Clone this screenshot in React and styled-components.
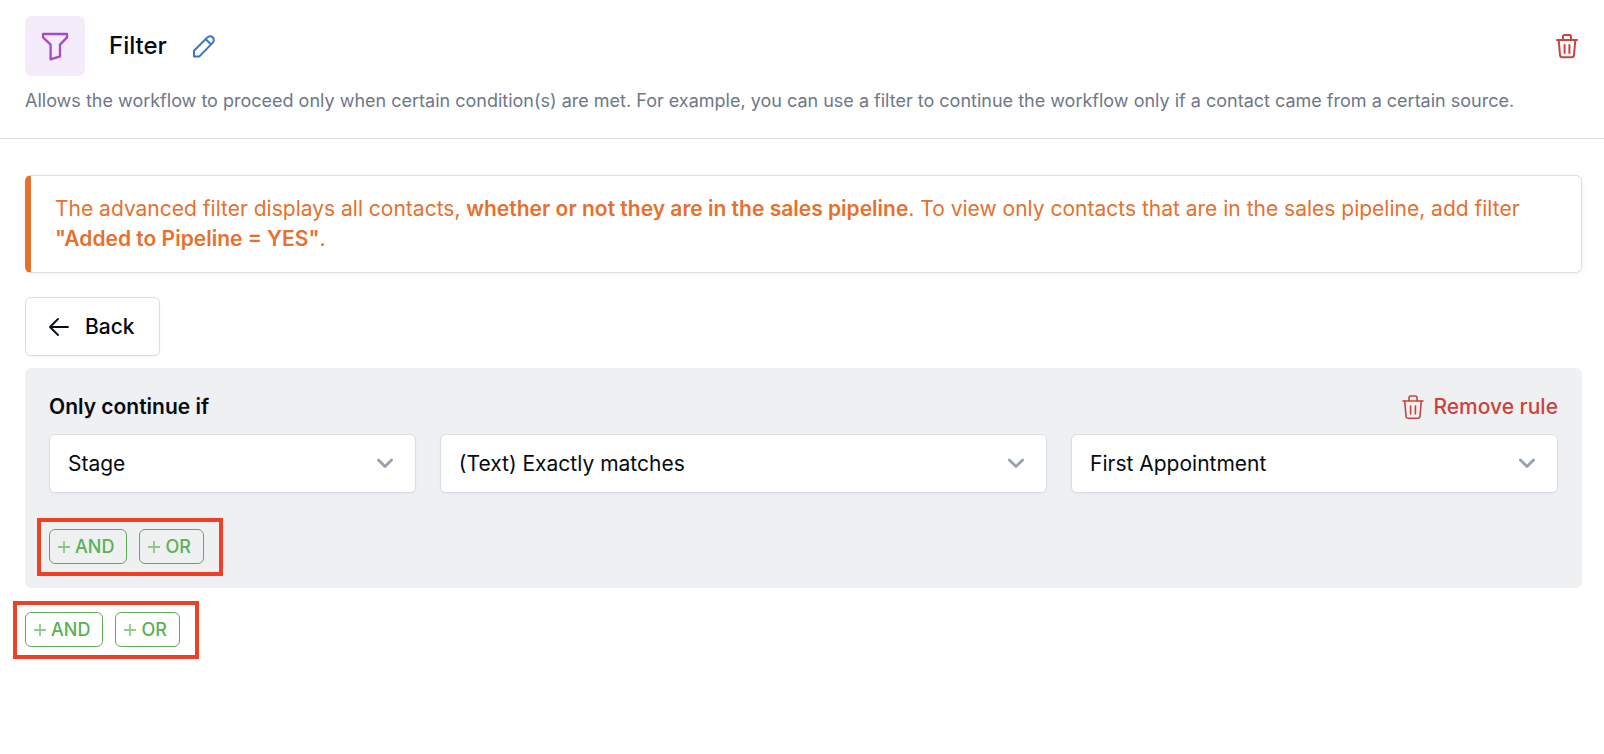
import React, { useState } from "react";
import styled, { createGlobalStyle } from "styled-components";

const TrashIcon = ({ thin }) => (
    <svg width="24" height="26" viewBox="0 0 24 26" fill="none" stroke="currentColor" strokeWidth={thin ? 1.6 : 2} strokeLinecap="round" strokeLinejoin="round" aria-hidden="true">
        <path d="M2 7h20" />
        <path d="M8 7V3.6Q8 2 9.6 2h4.8Q16 2 16 3.6V7" />
        <path d="M3.7 7l1.3 15.2q.2 2 2.2 2h9.6q2 0 2.2-2L20.3 7" />
        <path d="M9.6 12v8M14.4 12v8" />
    </svg>
);

const Chevron = () => (
    <svg width="18" height="12" viewBox="0 0 18 12" fill="none" stroke="currentColor" strokeWidth="2.8" strokeLinecap="round" strokeLinejoin="round" aria-hidden="true">
        <path d="M2.4 2l6.6 6.6L15.6 2" />
    </svg>
);

const fields = [
    { label: "Field", value: "Stage", options: ["Stage", "Source", "Tag"] },
    { label: "Operator", value: "(Text) Exactly matches", options: ["(Text) Exactly matches", "(Text) Contains"] },
    { label: "Value", value: "First Appointment", options: ["First Appointment", "Closed"] },
];

function Conditions() {
    return (
        <Group>
            {["AND", "OR"].map((name) => (
                <AddButton key={name} type="button">
                    <svg width="12" height="12" viewBox="0 0 12 12" stroke="currentColor" strokeWidth="1.8" opacity="0.65" aria-hidden="true">
                        <path d="M6 0v12M0 6h12" />
                    </svg>
                    {name}
                </AddButton>
            ))}
        </Group>
    );
}

function App() {
    const [values, setValues] = useState(fields.map((f) => f.value));

    function change(i, value) {
        setValues(values.map((v, n) => (n === i ? value : v)));
    }

    return (
        <>
            <GlobalStyle />
            <Header>
                <TitleRow>
                    <FilterBadge>
                        <svg width="28" height="30" viewBox="0 0 28 30" fill="none" stroke="currentColor" strokeWidth="2.3" strokeLinejoin="round" aria-hidden="true">
                            <path d="M2 3H26V6.4L19 13.6V25.4L9.6 28.4V13.6L2 6.4Z" />
                        </svg>
                    </FilterBadge>
                    <Title>Filter</Title>
                    <IconButton type="button" aria-label="Edit name" $color="#3b72c8">
                        <svg width="22" height="24" viewBox="1 0 22 24" fill="none" stroke="currentColor" strokeWidth="2" strokeLinejoin="round" aria-hidden="true">
                            <path d="M2 22.4v-5.6L15.4 3.4a3.5 3.5 0 0 1 5.4 5.2L7.4 22.4Z" />
                            <path d="M13.8 5.2l5.2 5.2" />
                        </svg>
                    </IconButton>
                    <Spacer />
                    <IconButton type="button" aria-label="Delete step" $color="#cb433c">
                        <TrashIcon />
                    </IconButton>
                </TitleRow>
                <Description>
                    Allows the workflow to proceed only when certain condition(s) are met. For example, you can use a filter to continue the workflow only if a contact came from a certain source.
                </Description>
            </Header>
            <Main>
                <Notice>
                    The advanced filter displays all contacts, <b>whether or not they are in the sales pipeline</b>. To view only contacts that are in the sales pipeline, add filter <b>"Added to Pipeline = YES"</b>.
                </Notice>
                <BackButton type="button">
                    <svg width="20" height="18" viewBox="0 0 20 18" fill="none" stroke="currentColor" strokeWidth="1.8" strokeLinecap="round" strokeLinejoin="round" aria-hidden="true">
                        <path d="M19 9H1M9 1L1 9l8 8" />
                    </svg>
                    Back
                </BackButton>
                <Rule>
                    <RuleHead>
                        <RuleTitle>Only continue if</RuleTitle>
                        <RemoveButton type="button">
                            <TrashIcon thin />
                            Remove rule
                        </RemoveButton>
                    </RuleHead>
                    <Fields>
                        {fields.map((f, i) => (
                            <SelectBox key={f.label}>
                                <Select aria-label={f.label} value={values[i]} onChange={(e) => change(i, e.target.value)}>
                                    {f.options.map((o) => <option key={o}>{o}</option>)}
                                </Select>
                                <Chevron />
                            </SelectBox>
                        ))}
                    </Fields>
                    <Conditions />
                </Rule>
                <Conditions />
            </Main>
        </>
    );
}

export default App;

//styled-components
const GlobalStyle = createGlobalStyle`
    * {
        box-sizing: border-box;
    }
    body {
        margin: 0;
        background: #fff;
        color: #060b12;
        font-family: Inter, "Liberation Sans", sans-serif;
    }
    button, select {
        font: inherit;
        color: inherit;
        cursor: pointer;
    }
    svg {
        display: block;
        flex: none;
    }
`;

const Header = styled.header`
    padding: 16px 25px 24px;
    border-bottom: 1px solid #dcdddf;
`;

const TitleRow = styled.div`
    display: flex;
    align-items: center;
`;

const FilterBadge = styled.div`
    display: flex;
    align-items: center;
    justify-content: center;
    width: 60px;
    height: 60px;
    border-radius: 6px;
    background: #f4ecfa;
    color: #a44bc5;
`;

const Title = styled.h1`
    margin: 0 26px 0 24px;
    font-size: 24px;
    line-height: 32px;
    font-weight: 500;
`;

const IconButton = styled.button`
    padding: 0;
    border: 0;
    background: none;
    color: ${props => props.$color};
`;

const Spacer = styled.div`
    flex: 1;
`;

const Description = styled.p`
    margin: 12px 0 0;
    font-size: 18px;
    line-height: 26px;
    color: #6d7889;
`;

const Main = styled.main`
    display: flex;
    flex-direction: column;
    align-items: flex-start;
    padding: 36px 22px 24px 25px;
`;

const Notice = styled.p`
    align-self: stretch;
    margin: 0 0 24px;
    padding: 18px 24px;
    border: 1px solid #dadee5;
    border-left: 6px solid #e6702e;
    border-radius: 6px;
    box-shadow: 0 2px 6px rgba(30, 40, 80, 0.05);
    color: #e6702e;
    font-size: 21px;
    line-height: 30px;
    b {
        font-weight: 600;
    }
`;

const BackButton = styled.button`
    display: flex;
    align-items: center;
    gap: 16px;
    height: 59px;
    margin-bottom: 12px;
    padding: 0 24px 0 23px;
    border: 1px solid #dadee5;
    border-radius: 6px;
    background: #fff;
    box-shadow: 0 1px 2px rgba(30, 40, 80, 0.06);
    font-size: 21px;
    line-height: 30px;
    font-weight: 500;
`;

const Rule = styled.section`
    align-self: stretch;
    margin-bottom: 24px;
    padding: 24px;
    border-radius: 6px;
    background: #eff0f2;
`;

const RuleHead = styled.div`
    display: flex;
    align-items: center;
    justify-content: space-between;
    height: 30px;
    margin-bottom: 12px;
`;

const RuleTitle = styled.h2`
    margin: 0;
    font-size: 21px;
    line-height: 30px;
    font-weight: 600;
`;

const RemoveButton = styled.button`
    display: flex;
    align-items: center;
    gap: 8px;
    padding: 0;
    border: 0;
    background: none;
    color: #cb433c;
    font-size: 21px;
    line-height: 30px;
    font-weight: 500;
`;

const Fields = styled.div`
    display: grid;
    grid-template-columns: 58fr 96fr 77fr;
    gap: 24px;
    margin-bottom: 36px;
`;

const SelectBox = styled.div`
    display: grid;
    align-items: center;
    > * {
        grid-area: 1 / 1;
    }
    > svg {
        justify-self: end;
        margin-right: 22px;
        color: #97a1b0;
        pointer-events: none;
    }
`;

const Select = styled.select`
    appearance: none;
    width: 100%;
    height: 59px;
    padding: 0 48px 0 18px;
    border: 1px solid #dadee5;
    border-radius: 6px;
    background: #fff;
    box-shadow: 0 1px 2px rgba(30, 40, 80, 0.05);
    font-size: 21px;
    line-height: 30px;
`;

/* the red outline lies over what is around the buttons */
const Group = styled.div`
    position: relative;
    display: flex;
    gap: 12px;
    width: fit-content;
    &::after {
        content: "";
        position: absolute;
        inset: -11px -19px -12px -12px;
        border: 4px solid #ee4026;
        pointer-events: none;
    }
`;

const AddButton = styled.button`
    display: flex;
    align-items: center;
    gap: 5px;
    height: 35px;
    padding: 0 12px 0 8px;
    border: 1px solid #5bb053;
    border-radius: 6px;
    background: transparent;
    color: #5bb053;
    font-size: 18px;
    font-weight: 500;
`;
